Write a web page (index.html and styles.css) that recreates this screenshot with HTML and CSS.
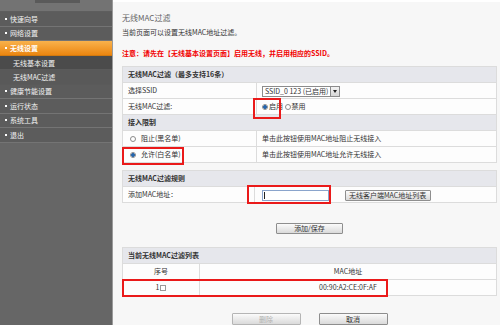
FILE: index.html
```html
<!DOCTYPE html>
<html lang="zh-CN">
<head>
<meta charset="utf-8">
<title>无线MAC过滤</title>
<link rel="stylesheet" href="styles.css">
</head>
<body>
<div class="page">
    <div class="sidebar">
        <div class="side-top"><span class="side-tab"></span></div>
        <ul class="menu">
            <li class="item"><span class="dot"></span>快速向导</li>
            <li class="item"><span class="dot"></span>网络设置</li>
            <li class="item active"><span class="dot"></span>无线设置</li>
            <li class="sub">无线基本设置</li>
            <li class="sub current">无线MAC过滤</li>
            <li class="item"><span class="dot"></span>健康节能设置</li>
            <li class="item"><span class="dot"></span>运行状态</li>
            <li class="item"><span class="dot"></span>系统工具</li>
            <li class="item"><span class="dot"></span>退出</li>
        </ul>
    </div>

    <div class="main">
        <h1 class="title">无线MAC过滤</h1>
        <p class="desc">当前页面可以设置无线MAC地址过滤。</p>
        <p class="note">注意：请先在【无线基本设置页面】启用无线，并启用相应的SSID。</p>

        <table class="grid">
            <tr><th colspan="2">无线MAC过滤（最多支持16条）</th></tr>
            <tr>
                <td class="label">选择SSID</td>
                <td>
                    <span class="select"><span class="select-text">SSID_0 123 (已启用)</span><span class="select-arrow"></span></span>
                </td>
            </tr>
            <tr>
                <td class="label">无线MAC过滤:</td>
                <td>
                    <span class="radio on"></span>启用
                    <span class="radio"></span>禁用
                </td>
            </tr>
            <tr><th colspan="2">接入限制</th></tr>
            <tr>
                <td class="label indent"><span class="radio"></span>阻止(黑名单)</td>
                <td>单击此按钮使用MAC地址阻止无线接入</td>
            </tr>
            <tr>
                <td class="label indent"><span class="radio on"></span>允许(白名单)</td>
                <td>单击此按钮使用MAC地址允许无线接入</td>
            </tr>
        </table>

        <table class="grid rules">
            <tr><th colspan="2">无线MAC过滤规则</th></tr>
            <tr>
                <td class="label">添加MAC地址：</td>
                <td>
                    <span class="text-input"><span class="caret"></span></span>
                    <button class="btn btn-list" type="button">无线客户端MAC地址列表</button>
                </td>
            </tr>
        </table>

        <div class="actions save-row">
            <button class="btn btn-save" type="button">添加/保存</button>
        </div>

        <table class="grid list">
            <tr><th colspan="2">当前无线MAC过滤列表</th></tr>
            <tr class="center">
                <td class="num-col">序号</td>
                <td>MAC地址</td>
            </tr>
            <tr class="center">
                <td class="num-col">1<span class="check"></span></td>
                <td>00:90:A2:CE:0F:AF</td>
            </tr>
        </table>

        <div class="actions bottom-row">
            <button class="btn btn-wide" type="button" disabled>删除</button>
            <button class="btn btn-wide" type="button">取消</button>
        </div>

        <!-- red highlight marks drawn over the screenshot -->
        <div class="mark mark-enable"></div>
        <div class="mark mark-allow"></div>
        <div class="mark mark-input"></div>
        <div class="mark mark-row"></div>
    </div>
</div>
</body>
</html>
```

FILE: styles.css
```css
body {
    margin: 0;
    padding: 0;
    font-family: "Noto Sans CJK SC", "Liberation Sans", sans-serif;
    font-size: 7px;
    color: #333;
    background-color: #f7f7f7;
    overflow: hidden;
}
.page {
    display: flex;
    width: 500px;
    height: 325px;
}

/* left menu */
.sidebar {
    width: 112px;
    background-color: #666;
    border-right: 1px solid #9a9a9a;
    flex-shrink: 0;
}
.side-top {
    height: 12px;
    background-color: #737373;
    border-bottom: 1px solid #5e5e5e;
    box-sizing: border-box;
}
.side-tab {
    display: block;
    margin-left: 35px;
    width: 45px;
    height: 3px;
    background-color: #5a5a5a;
}
.menu {
    list-style: none;
    margin: 0;
    padding: 0;
}
.menu li {
    height: 14.5px;
    line-height: 14.5px;
    color: #f2f2f2;
    box-sizing: border-box;
    border-bottom: 1px solid #747474;
    background-color: #5c5c5c;
    white-space: nowrap;
}
.item {
    display: flex;
    align-items: center;
    padding-left: 5px;
}
.dot {
    width: 2px;
    height: 2px;
    background-color: #fff;
    margin-right: 3px;
}
.item.active {
    background: linear-gradient(#f9b24c, #ec8610);
    color: #fff;
    font-weight: bold;
    border-bottom-color: #d27a10;
}
.sub {
    padding-left: 13px;
}
.menu .sub {
    background-color: #4b4b4b;
    border-bottom-color: #5a5a5a;
}
.menu .sub.current {
    background-color: #595959;
}

/* main content */
.main {
    position: relative;
    flex: 1;
    padding: 11px 3px 0 9px;
    border-top: 2px solid #fff;
    box-sizing: border-box;
}
.title {
    margin: 0;
    font-size: 8px;
    font-weight: normal;
    line-height: 10px;
    color: #666;
}
.desc {
    margin: 4px 0 0;
    line-height: 10px;
}
.note {
    margin: 11px 0 0;
    line-height: 10px;
    color: #f20000;
    font-weight: 600;
}

.grid {
    width: 100%;
    margin-top: 8px;
    border-collapse: separate;
    border-spacing: 0;
    border: 1px solid #dcdcdc;
    border-bottom: none;
    background-color: #fdfdfd;
}
.grid th,
.grid td {
    padding: 0 5px;
    line-height: 15px;
    border-bottom: 1px solid #dcdcdc;
    text-align: left;
    white-space: nowrap;
}
.grid th {
    background-color: #e6e7ec;
    font-weight: bold;
    color: #333;
}
.grid td.label {
    width: 121px;
    border-right: 1px solid #dcdcdc;
}
.grid td.indent {
    padding-left: 7px;
}
.rules {
    margin-top: 7px;
}
.list {
    margin-top: 13px;
}
.list td.num-col {
    width: 66px;
    border-right: 1px solid #dcdcdc;
}
.list .center td {
    text-align: center;
}

/* form bits */
.select {
    display: inline-flex;
    align-items: center;
    vertical-align: middle;
    width: 78px;
    height: 11px;
    border: 1px solid #8c8c8c;
    background-color: #fff;
    box-sizing: border-box;
}
.select-text {
    flex: 1;
    padding-left: 2px;
    line-height: 9px;
}
.select-arrow {
    position: relative;
    width: 8px;
    height: 9px;
    border-left: 1px solid #8c8c8c;
    background: linear-gradient(#f4f4f4, #d6d6d6);
}
.select-arrow::after {
    content: "";
    position: absolute;
    left: 2px;
    top: 3px;
    border-left: 2px solid transparent;
    border-right: 2px solid transparent;
    border-top: 3px solid #222;
}
.radio {
    display: inline-block;
    vertical-align: middle;
    width: 6px;
    height: 6px;
    margin: -1px 1px 0 0;
    border: 1px solid #8a8a8a;
    border-radius: 50%;
    background-color: #fff;
    box-sizing: border-box;
}
.radio.on {
    background: radial-gradient(circle, #2466b0 0 1.6px, #e8eef6 2px);
}
.indent .radio {
    margin-right: 5px;
}
.check {
    display: inline-block;
    vertical-align: middle;
    width: 6px;
    height: 6px;
    margin: -1px 0 0 1px;
    border: 1px solid #9a9a9a;
    background-color: #fff;
    box-sizing: border-box;
}
.text-input {
    display: inline-block;
    vertical-align: middle;
    width: 67px;
    height: 11px;
    margin-left: 2px;
    border: 1px solid #8aa4cc;
    background-color: #fff;
    box-sizing: border-box;
    padding: 1px 0 0 1px;
}
.caret {
    display: block;
    width: 1px;
    height: 7px;
    background-color: #222;
}

.btn {
    height: 11px;
    padding: 0;
    font-family: "Noto Sans CJK SC", "Liberation Sans", sans-serif;
    font-size: 7px;
    line-height: 9px;
    color: #333;
    border: 1px solid #8e8e8e;
    border-radius: 1px;
    background: linear-gradient(#fbfbfb, #dadada);
    vertical-align: middle;
}
.btn:disabled {
    color: #b0b0b0;
    border-color: #b5b5b5;
}
.btn-list {
    width: 86px;
    margin-left: 14px;
}
.btn-save {
    width: 67px;
}
.btn-wide {
    width: 69px;
    height: 12px;
}
.actions {
    display: flex;
    justify-content: center;
}
.save-row {
    margin-top: 20px;
}
.bottom-row {
    margin-top: 17px;
    gap: 18px;
}

/* red annotation frames */
.mark {
    position: absolute;
    border: 2px solid #ea1a1a;
    box-sizing: border-box;
}
.mark-enable {
    left: 140px;
    top: 96px;
    width: 28px;
    height: 21px;
}
.mark-allow {
    left: 9px;
    top: 145px;
    width: 62px;
    height: 18px;
}
.mark-input {
    left: 134px;
    top: 183px;
    width: 84px;
    height: 19px;
}
.mark-row {
    left: 9px;
    top: 277px;
    width: 266px;
    height: 18px;
}
```
